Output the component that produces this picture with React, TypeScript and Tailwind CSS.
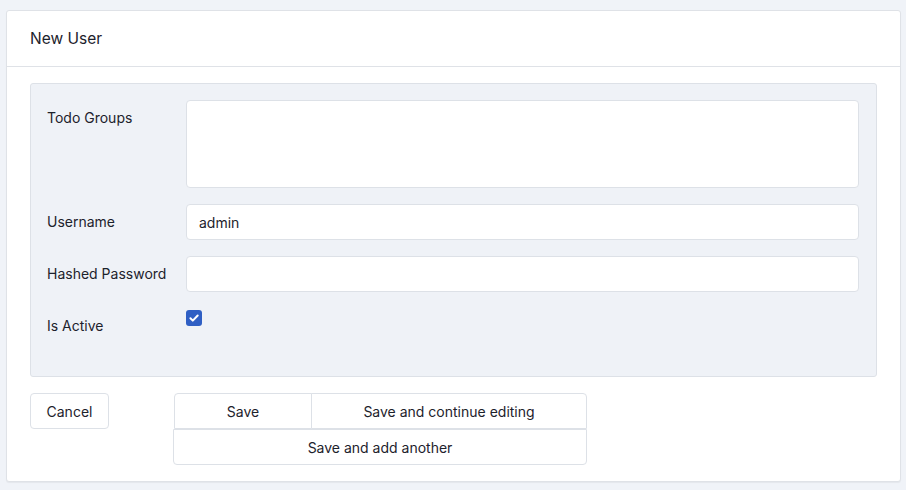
export default function App() {
  return (
    <div
      className="min-h-[490px] w-full bg-[#f0f3f8] pl-[6px] pr-[5px] pt-[10px] pb-[8px] text-[#1d222c]"
      style={{ fontFamily: "Inter, 'Noto Sans', sans-serif" }}
    >
      <div className="rounded-[3px] border border-[#dfe2e7] bg-white shadow-[0_1px_1px_rgba(0,0,0,0.05)]">
        <div className="flex h-[56px] items-center border-b border-[#dfe2e7] px-[23px] text-[15.5px]">
          New User
        </div>
        <div className="px-[23px] pt-[16px] pb-[16px]">
          <div className="rounded-[3px] border border-[#dde1e7] bg-[#eff2f7] pl-[16px] pr-[17px] pt-[16px] pb-[32px]">
            <div className="flex flex-col gap-[16px]">
              <div className="flex">
                <div className="w-[139px] shrink-0 pt-[8px] text-[14px] leading-[20px]">Todo Groups</div>
                <div className="h-[88px] flex-1 rounded-[4px] border border-[#dde1e7] bg-white" />
              </div>
              <div className="flex">
                <div className="w-[139px] shrink-0 pt-[8px] text-[14px] leading-[20px]">Username</div>
                <div className="flex h-[36px] flex-1 items-center rounded-[4px] border border-[#dde1e7] bg-white px-[12px] text-[14px]">
                  admin
                </div>
              </div>
              <div className="flex">
                <div className="w-[139px] shrink-0 pt-[8px] text-[14px] leading-[20px]">Hashed Password</div>
                <div className="h-[36px] flex-1 rounded-[4px] border border-[#dde1e7] bg-white" />
              </div>
              <div className="flex h-[36px]">
                <div className="w-[139px] shrink-0 pt-[8px] text-[14px] leading-[20px]">Is Active</div>
                <div className="pt-[2px]">
                  <div className="flex h-[16px] w-[16px] items-center justify-center rounded-[3px] bg-[#2f5fc4]">
                    <svg width="12" height="12" viewBox="0 0 12 12" fill="none">
                      <path d="M2.4 6.2l2.4 2.4L9.7 3.5" stroke="white" strokeWidth="2" strokeLinecap="round" strokeLinejoin="round" />
                    </svg>
                  </div>
                </div>
              </div>
            </div>
          </div>
          <div className="mt-[16px] flex items-start">
            <button className="h-[36px] w-[79px] rounded-[4px] border border-[#dde1e7] bg-white text-[14px]">
              Cancel
            </button>
            <div className="ml-[64px] flex w-[414px] flex-col">
              <div className="flex pl-px">
                <button className="h-[36px] w-[138px] rounded-tl-[4px] border border-[#dde1e7] bg-white text-[14px]">
                  Save
                </button>
                <button className="-ml-px h-[36px] flex-1 rounded-tr-[4px] border border-[#dde1e7] bg-white text-[14px]">
                  Save and continue editing
                </button>
              </div>
              <button className="h-[36px] w-full rounded-b-[4px] border border-[#dde1e7] bg-white text-[14px]">
                Save and add another
              </button>
            </div>
          </div>
        </div>
      </div>
    </div>
  );
}
